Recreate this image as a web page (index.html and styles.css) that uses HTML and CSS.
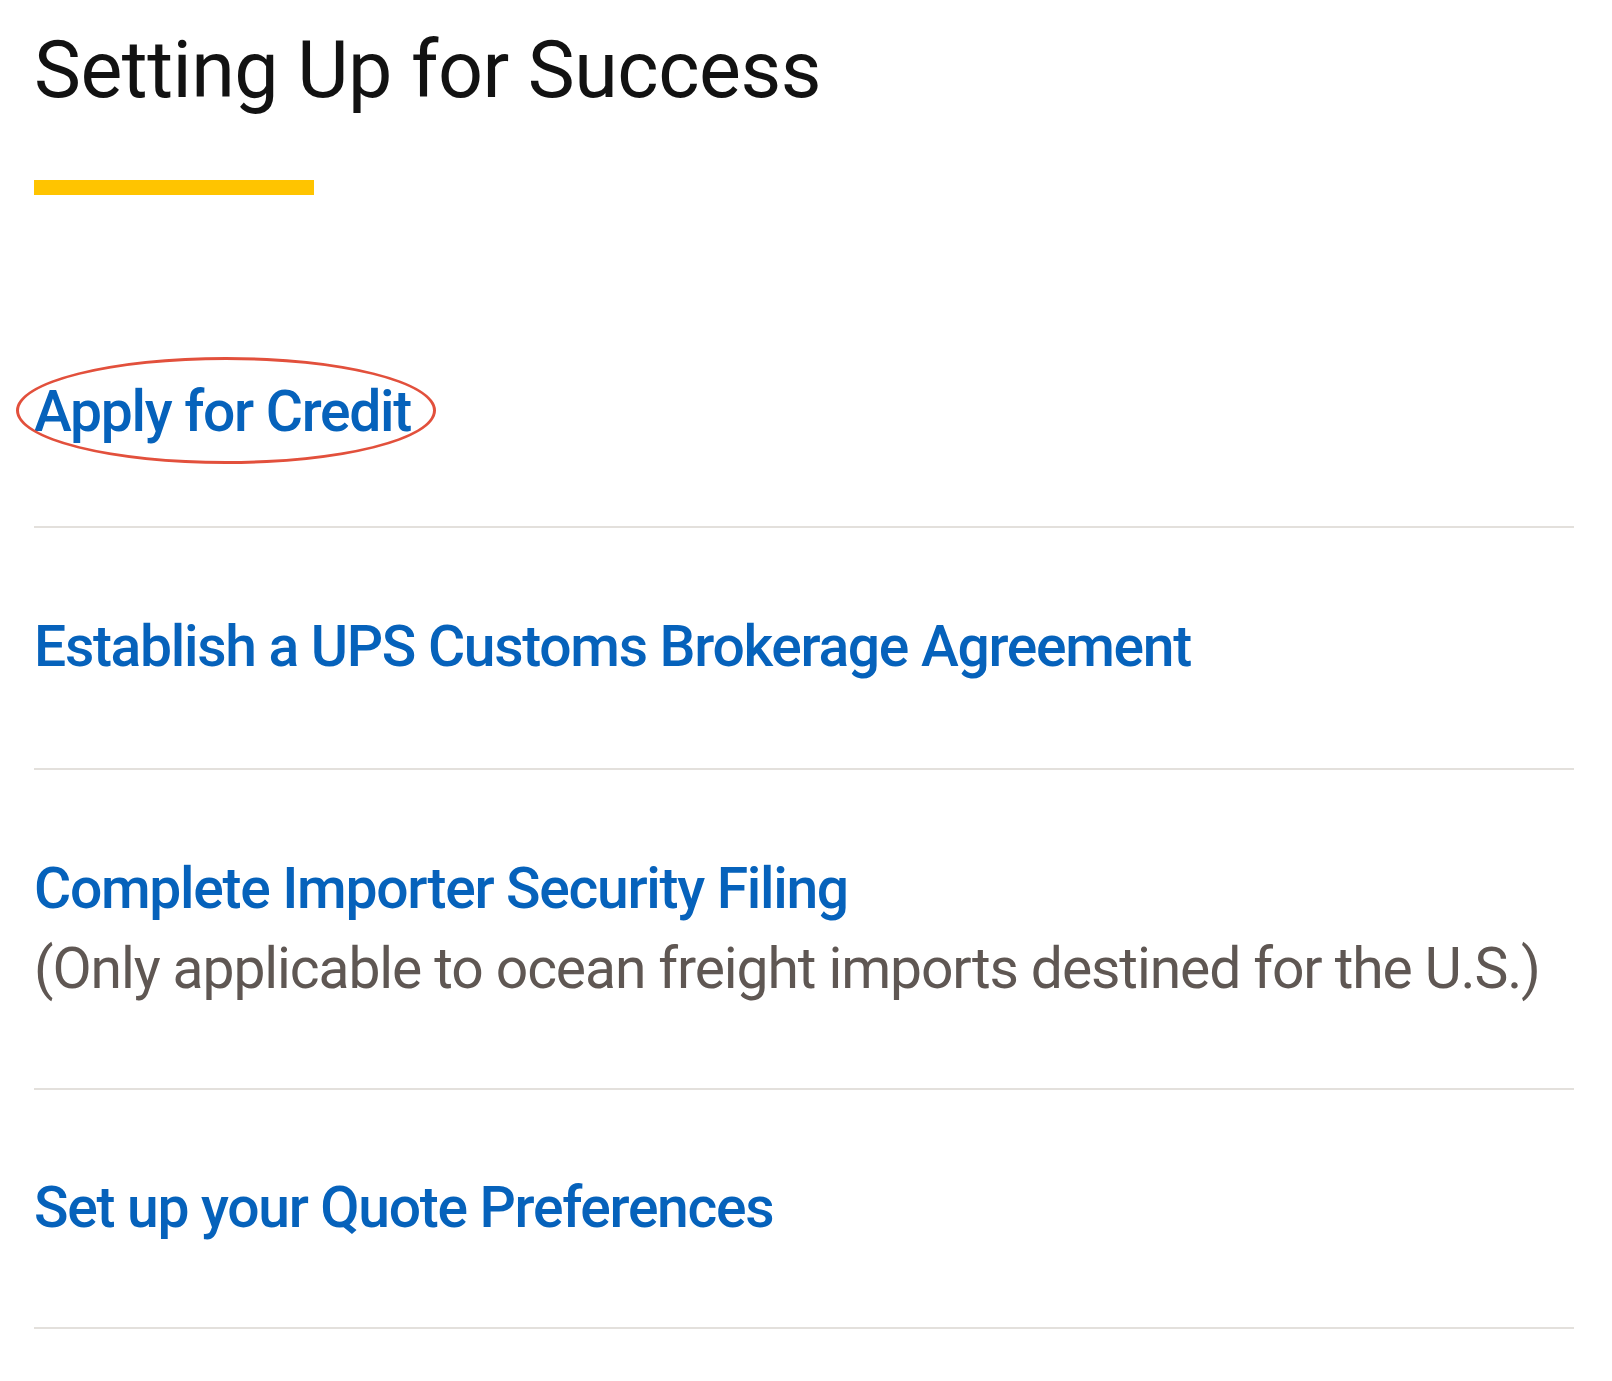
FILE: index.html
```html
<!DOCTYPE html>
<html lang="en">
<head>
<meta charset="utf-8">
<title>Setting Up for Success</title>
<link rel="stylesheet" href="styles.css">
</head>
<body>
<main class="page">
  <h1 class="title">Setting Up for Success</h1>
  <div class="accent"></div>
  <ul class="steps">
    <li class="step step--first">
      <span class="marked">
        <a class="step-link" href="#">Apply for Credit</a>
        <span class="circle" aria-hidden="true"></span>
      </span>
    </li>
    <li class="step">
      <a class="step-link" href="#">Establish a UPS Customs Brokerage Agreement</a>
    </li>
    <li class="step">
      <a class="step-link" href="#">Complete Importer Security Filing</a>
      <p class="step-note">(Only applicable to ocean freight imports destined for the U.S.)</p>
    </li>
    <li class="step">
      <a class="step-link" href="#">Set up your Quote Preferences</a>
    </li>
  </ul>
</main>
</body>
</html>
```
FILE: styles.css
```css
html, body {
  margin: 0;
  padding: 0;
  background: #ffffff;
}

body {
  font-family: Roboto, "Liberation Sans", Arial, sans-serif;
}

.page {
  width: 1540px;
  padding: 22px 0 0 34px;
}

.title {
  margin: 0;
  font-size: 79px;
  font-weight: 400;
  line-height: 96px;
  color: #121212;
  letter-spacing: -0.5px;
}

.accent {
  width: 280px;
  height: 15px;
  margin-top: 62px;
  background: #ffc400;
}

.steps {
  list-style: none;
  margin: 98px 0 0 0;
  padding: 0;
}

.step {
  padding: 79px 0 79px 0;
  border-bottom: 2px solid #e3e0dc;
  font-size: 57px;
  line-height: 80px;
}

.step--first {
  padding-bottom: 74px;
}

.step:nth-child(2) {
  padding-bottom: 81px;
}

.step:nth-child(4) {
  padding-top: 78px;
}

.step-link {
  color: #0662bb;
  font-weight: 500;
  letter-spacing: -1.3px;
  text-decoration: none;
}

.step-note {
  margin: 0;
  color: #5f5753;
  font-weight: 400;
  letter-spacing: -1.1px;
  white-space: nowrap;
}

.marked {
  position: relative;
  display: inline-block;
}

.circle {
  position: absolute;
  left: -18px;
  top: -15px;
  width: 420px;
  height: 107px;
  box-sizing: border-box;
  border: 3px solid #e2503c;
  border-radius: 50%;
  pointer-events: none;
}
```
